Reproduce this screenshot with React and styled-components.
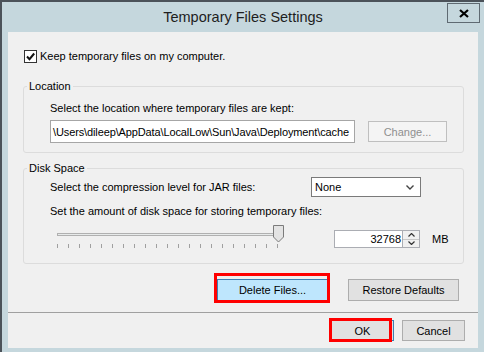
import React from "react";
import styled, { createGlobalStyle } from "styled-components";

const Global = createGlobalStyle`
  html, body { margin: 0; padding: 0; background: #c5d7dd; }
  * { box-sizing: border-box; }
  body { font-family: "Liberation Sans", Arial, sans-serif; font-size: 11px; color: #000; }
`;

const Window = styled.div`
  width: 484px;
  height: 352px;
  background: #c5d7dd;
  border-top: 2px solid #4b5259;
  border-left: 2px solid #4b5259;
  display: flex;
  flex-direction: column;
  overflow: hidden;
`;

const TitleBar = styled.div`
  height: 30px;
  display: grid;
  grid-template-columns: 1fr auto 1fr;
  align-items: center;
`;

const Title = styled.div`
  grid-column: 2;
  font-size: 14.5px;
  color: #1e1e1e;
  padding-bottom: 1px;
`;

const CloseButton = styled.div`
  grid-column: 3;
  justify-self: end;
  align-self: start;
  margin-top: 1px;
  margin-right: 4px;
  width: 33px;
  height: 20px;
  border: 1px solid #5f6a72;
  display: flex;
  align-items: center;
  justify-content: center;
`;

const Client = styled.div`
  margin-left: 6px;
  width: 470px;
  height: 316px;
  background: #f0f0f0;
  display: flex;
  flex-direction: column;
`;

const CheckRow = styled.label`
  display: flex;
  align-items: center;
  margin: 18px 0 0 16px;
  height: 13px;
  line-height: 13px;
`;

const CheckBox = styled.span`
  width: 13px;
  height: 13px;
  border: 1px solid #333;
  background: #fff;
  display: flex;
  align-items: center;
  justify-content: center;
  margin-right: 3px;
`;

const Group = styled.div`
  position: relative;
  margin: ${(p) => p.$top}px 0 0 15px;
  width: 441px;
  height: ${(p) => p.$height}px;
  border: 1px solid #dcdcdc;
  border-radius: 3px;
  padding: ${(p) => p.$pad}px 0 0 26px;
`;

const GroupLabel = styled.span`
  position: absolute;
  top: -8px;
  left: 3px;
  padding: 0 2px;
  line-height: 15px;
  background: #f0f0f0;
`;

const TextLine = styled.div`
  line-height: 15px;
  height: 15px;
  margin-top: ${(p) => p.$top || 0}px;
`;

const Row = styled.div`
  display: flex;
  align-items: ${(p) => p.$align || "center"};
  margin-top: ${(p) => p.$top || 0}px;
  height: ${(p) => p.$height}px;
`;

const PathField = styled.div`
  width: 305px;
  height: 23px;
  border: 1px solid #a6a6a6;
  background: #fff;
  display: flex;
  align-items: center;
  white-space: nowrap;
  padding: 0 1px 0 2px;
  letter-spacing: -0.12px;
`;

const Button = styled.div`
  width: ${(p) => p.$width}px;
  height: ${(p) => p.$height || 22}px;
  margin-left: ${(p) => p.$left || 0}px;
  border: 1px solid ${(p) => (p.$disabled ? "#bfbfbf" : p.$hover ? "#3c7fb1" : p.$default ? "#3c7fb1" : "#adadad")};
  background: ${(p) => (p.$disabled ? "#f4f4f4" : p.$hover ? "#bee6fd" : "#e1e1e1")};
  color: ${(p) => (p.$disabled ? "#8f8f8f" : "#000")};
  display: flex;
  align-items: center;
  justify-content: center;
  position: relative;
  flex: none;
`;

const Highlight = styled.span`
  position: absolute;
  left: ${(p) => p.$l}px;
  top: ${(p) => p.$t}px;
  width: ${(p) => p.$w}px;
  height: ${(p) => p.$h}px;
  border: 3px solid #ff0000;
  pointer-events: none;
`;

const LabelCell = styled.div`
  width: 261px;
  line-height: 15px;
`;

const Select = styled.div`
  width: 110px;
  height: 20px;
  border: 1px solid #7a7a7a;
  background: #fff;
  display: flex;
  align-items: center;
  justify-content: space-between;
  padding: 0 6px 0 3px;
`;

const SliderWrap = styled.div`
  margin-left: 5px;
  width: 232px;
  height: 25px;
  flex: none;
`;

const Spinner = styled.div`
  margin: 6px 0 0 47px;
  display: flex;
  height: 18px;
`;

const SpinInput = styled.div`
  width: 68px;
  height: 18px;
  border: 1px solid #abadb3;
  border-right: none;
  background: #fff;
  text-align: right;
  line-height: 16px;
  padding-right: 1px;
`;

const SpinButtons = styled.div`
  width: 18px;
  height: 18px;
  border: 1px solid #abadb3;
  display: flex;
  flex-direction: column;
  background: #f0f0f0;
`;

const SpinHalf = styled.div`
  flex: 1;
  display: flex;
  align-items: center;
  justify-content: center;
  & + & { border-top: 1px solid #c8c8c8; }
`;

const Unit = styled.div`
  margin: 6px 0 0 12px;
  line-height: 18px;
`;

const ActionRow = styled.div`
  display: flex;
  justify-content: flex-end;
  margin: 15px 19px 0 0;
  gap: 20px;
`;

const Separator = styled.div`
  margin-top: 11px;
  height: 1px;
  background: #a0a0a0;
`;

const FooterRow = styled.div`
  display: flex;
  justify-content: flex-end;
  margin: 7px 13px 0 0;
  gap: 8px;
`;

const Slider = () => {
  const ticks = [];
  for (let i = 0; i <= 20; i++) {
    const x = 2.5 + i * 11;
    ticks.push(<line key={i} x1={x} y1={20} x2={x} y2={24} stroke="#a0a0a0" strokeWidth="1" />);
  }
  return (
    <svg width="232" height="25" viewBox="0 0 232 25">
      <rect x="2.5" y="9.5" width="221" height="2" fill="#e7eaea" stroke="#b0b0b0" />
      {ticks}
      <polygon points="218.5,1.5 228.5,1.5 228.5,13 223.5,18 218.5,13" fill="#e3e3e3" stroke="#7b7b7b" />
    </svg>
  );
};

export default function App() {
  return (
    <>
      <Global />
      <Window>
        <TitleBar>
          <Title>Temporary Files Settings</Title>
          <CloseButton>
            <svg width="10" height="9" viewBox="0 0 10 9">
              <path d="M1 1 L9 8 M9 1 L1 8" stroke="#000" strokeWidth="2.2" />
            </svg>
          </CloseButton>
        </TitleBar>
        <Client>
          <CheckRow>
            <CheckBox>
              <svg width="11" height="11" viewBox="0 0 11 11">
                <path d="M2 5.5 L4.5 8.2 L9.2 2.5" stroke="#111" strokeWidth="2" fill="none" />
              </svg>
            </CheckBox>
            Keep temporary files on my computer.
          </CheckRow>

          <Group $top={23} $height={67} $pad={14}>
            <GroupLabel>Location</GroupLabel>
            <TextLine>Select the location where temporary files are kept:</TextLine>
            <Row $top={4} $height={23}>
              <PathField>\Users\dileep\AppData\LocalLow\Sun\Java\Deployment\cache</PathField>
              <Button $width={79} $height={21} $left={13} $disabled>
                Change...
              </Button>
            </Row>
          </Group>

          <Group $top={15} $height={96} $pad={8}>
            <GroupLabel>Disk Space</GroupLabel>
            <Row $height={20}>
              <LabelCell>Select the compression level for JAR files:</LabelCell>
              <Select>
                <span>None</span>
                <svg width="8" height="5" viewBox="0 0 8 5">
                  <path d="M0.5 0.5 L4 4 L7.5 0.5" stroke="#444" strokeWidth="1.4" fill="none" />
                </svg>
              </Select>
            </Row>
            <TextLine $top={7}>Set the amount of disk space for storing temporary files:</TextLine>
            <Row $top={5} $height={25} $align="flex-start">
              <SliderWrap>
                <Slider />
              </SliderWrap>
              <Spinner>
                <SpinInput>32768</SpinInput>
                <SpinButtons>
                  <SpinHalf>
                    <svg width="7" height="4" viewBox="0 0 7 4">
                      <path d="M0.5 3.5 L3.5 0.5 L6.5 3.5" stroke="#333" strokeWidth="1.2" fill="none" />
                    </svg>
                  </SpinHalf>
                  <SpinHalf>
                    <svg width="7" height="4" viewBox="0 0 7 4">
                      <path d="M0.5 0.5 L3.5 3.5 L6.5 0.5" stroke="#333" strokeWidth="1.2" fill="none" />
                    </svg>
                  </SpinHalf>
                </SpinButtons>
              </Spinner>
              <Unit>MB</Unit>
            </Row>
          </Group>

          <ActionRow>
            <Button $width={111} $hover>
              Delete Files...
              <Highlight $l={-4} $t={-7} $w={116} $h={30} />
            </Button>
            <Button $width={111}>Restore Defaults</Button>
          </ActionRow>

          <Separator />

          <FooterRow>
            <Button $width={63} $height={21} $default>
              OK
              <Highlight $l={-3} $t={-3} $w={63} $h={24} />
            </Button>
            <Button $width={63} $height={21}>Cancel</Button>
          </FooterRow>
        </Client>
      </Window>
    </>
  );
}
